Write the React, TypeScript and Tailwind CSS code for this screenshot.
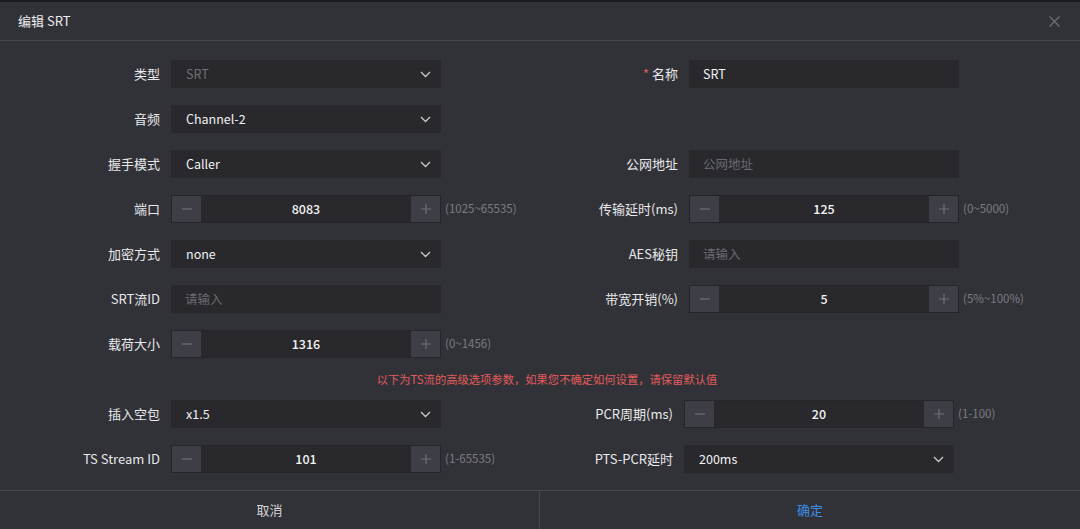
import { ReactNode } from "react";

const font = { fontFamily: '"Noto Sans CJK SC", "Noto Sans", sans-serif' };

const Chevron = () => (
  <svg width="11" height="7" viewBox="0 0 11 7" fill="none">
    <path d="M1 1L5.5 5.5L10 1" stroke="#c9c9cc" strokeWidth="1.3" />
  </svg>
);

const Select = ({ value, disabled }: { value: string; disabled?: boolean }) => (
  <div className="flex h-7 w-[270px] items-center justify-between bg-[#28282d] pl-[15px] pr-[10px]">
    <span className={disabled ? "text-[#6f6f74]" : "text-[#f2f2f2]"}>{value}</span>
    <Chevron />
  </div>
);

const TextInput = ({ value, placeholder }: { value?: string; placeholder?: string }) => (
  <div className="flex h-7 w-[270px] items-center bg-[#28282d] pl-[14px]">
    {value ? (
      <span className="text-[#f2f2f2]">{value}</span>
    ) : (
      <span className="text-[#6a6a70]">{placeholder}</span>
    )}
  </div>
);

const Stepper = ({ value, hint }: { value: string; hint: string }) => (
  <div className="flex items-center">
    <div className="flex h-7 w-[270px] border border-[#26262a] bg-[#28282d]">
      <div className="flex w-[29px] items-center justify-center bg-[#3e3f46]">
        <svg width="12" height="12" viewBox="0 0 12 12">
          <path d="M1 6H11" stroke="#6f7076" strokeWidth="1.2" />
        </svg>
      </div>
      <div className="flex flex-1 items-center justify-center font-medium text-[#f4f4f4]">{value}</div>
      <div className="flex w-[29px] items-center justify-center bg-[#3e3f46]">
        <svg width="12" height="12" viewBox="0 0 12 12">
          <path d="M1 6H11M6 1V11" stroke="#6f7076" strokeWidth="1.2" />
        </svg>
      </div>
    </div>
    <span className="ml-[4px] text-[11.5px] text-[#7b7c82]">{hint}</span>
  </div>
);

const Field = ({
  label,
  width,
  required,
  children,
}: {
  label: string;
  width: string;
  required?: boolean;
  children?: ReactNode;
}) => (
  <div className="flex items-center">
    <div className={`${width} pr-[11px] text-right text-[13px] text-[#e8e8ea]`}>
      {required && <span className="mr-[3px] text-[#e05a5a]">*</span>}
      {label}
    </div>
    {children}
  </div>
);

const Row = ({ left, right }: { left: ReactNode; right?: ReactNode }) => (
  <div className="flex h-7 items-center">
    <div className="w-[540px]">{left}</div>
    <div>{right}</div>
  </div>
);

export default function App() {
  return (
    <div className="h-[529px] w-[1080px] overflow-hidden bg-[#1c1c1f] pt-[2px] text-[12.5px]" style={font}>
      <div className="flex h-[527px] flex-col bg-[#313238]">
        <div className="flex h-[39px] items-center justify-between border-b border-[#46474d] pl-[18px] pr-[20px]">
          <span className="text-[13px] text-[#ececee]">编辑 SRT</span>
          <svg width="11" height="11" viewBox="0 0 11 11">
            <path d="M0.5 0.5L10.5 10.5M10.5 0.5L0.5 10.5" stroke="#6d6e74" strokeWidth="1.3" />
          </svg>
        </div>

        <div className="flex flex-1 flex-col pt-[19px]">
          <div className="flex flex-col gap-[17px]">
            <Row
              left={
                <Field label="类型" width="w-[171px]">
                  <Select value="SRT" disabled />
                </Field>
              }
              right={
                <Field label="名称" width="w-[149px]" required>
                  <TextInput value="SRT" />
                </Field>
              }
            />
            <Row
              left={
                <Field label="音频" width="w-[171px]">
                  <Select value="Channel-2" />
                </Field>
              }
            />
            <Row
              left={
                <Field label="握手模式" width="w-[171px]">
                  <Select value="Caller" />
                </Field>
              }
              right={
                <Field label="公网地址" width="w-[149px]">
                  <TextInput placeholder="公网地址" />
                </Field>
              }
            />
            <Row
              left={
                <Field label="端口" width="w-[171px]">
                  <Stepper value="8083" hint="(1025~65535)" />
                </Field>
              }
              right={
                <Field label="传输延时(ms)" width="w-[149px]">
                  <Stepper value="125" hint="(0~5000)" />
                </Field>
              }
            />
            <Row
              left={
                <Field label="加密方式" width="w-[171px]">
                  <Select value="none" />
                </Field>
              }
              right={
                <Field label="AES秘钥" width="w-[149px]">
                  <TextInput placeholder="请输入" />
                </Field>
              }
            />
            <Row
              left={
                <Field label="SRT流ID" width="w-[171px]">
                  <TextInput placeholder="请输入" />
                </Field>
              }
              right={
                <Field label="带宽开销(%)" width="w-[149px]">
                  <Stepper value="5" hint="(5%~100%)" />
                </Field>
              }
            />
            <Row
              left={
                <Field label="载荷大小" width="w-[171px]">
                  <Stepper value="1316" hint="(0~1456)" />
                </Field>
              }
            />
          </div>

          <div className="flex h-[42px] items-center justify-center pl-[14px] text-[11.3px] text-[#e35b5b]">
            以下为TS流的高级选项参数，如果您不确定如何设置，请保留默认值
          </div>

          <div className="flex flex-col gap-[17px]">
            <Row
              left={
                <Field label="插入空包" width="w-[171px]">
                  <Select value="x1.5" />
                </Field>
              }
              right={
                <Field label="PCR周期(ms)" width="w-[144px]">
                  <Stepper value="20" hint="(1-100)" />
                </Field>
              }
            />
            <Row
              left={
                <Field label="TS Stream ID" width="w-[171px]">
                  <Stepper value="101" hint="(1-65535)" />
                </Field>
              }
              right={
                <Field label="PTS-PCR延时" width="w-[144px]">
                  <Select value="200ms" />
                </Field>
              }
            />
          </div>
        </div>

        <div className="flex h-[39px] border-t border-[#46474d] text-[13px]">
          <div className="flex w-[540px] items-center justify-center border-r border-[#46474d] text-[#d6d6d8]">取消</div>
          <div className="flex flex-1 items-center justify-center text-[#3d8ee6]">确定</div>
        </div>
      </div>
    </div>
  );
}
